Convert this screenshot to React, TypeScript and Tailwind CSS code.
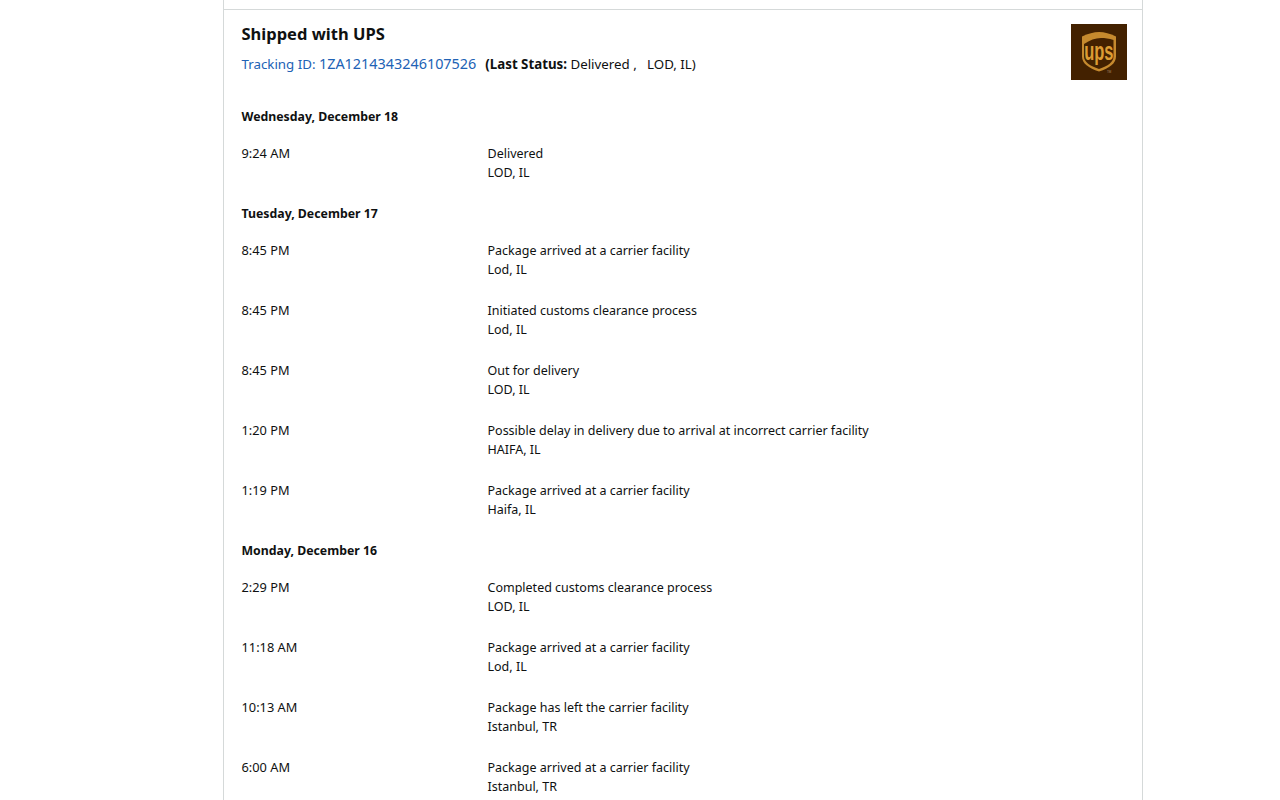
const days = [
    {
        date: "Wednesday, December 18",
        events: [{ time: "9:24 AM", status: "Delivered", place: "LOD, IL" }],
    },
    {
        date: "Tuesday, December 17",
        events: [
            { time: "8:45 PM", status: "Package arrived at a carrier facility", place: "Lod, IL" },
            { time: "8:45 PM", status: "Initiated customs clearance process", place: "Lod, IL" },
            { time: "8:45 PM", status: "Out for delivery", place: "LOD, IL" },
            { time: "1:20 PM", status: "Possible delay in delivery due to arrival at incorrect carrier facility", place: "HAIFA, IL" },
            { time: "1:19 PM", status: "Package arrived at a carrier facility", place: "Haifa, IL" },
        ],
    },
    {
        date: "Monday, December 16",
        events: [
            { time: "2:29 PM", status: "Completed customs clearance process", place: "LOD, IL" },
            { time: "11:18 AM", status: "Package arrived at a carrier facility", place: "Lod, IL" },
            { time: "10:13 AM", status: "Package has left the carrier facility", place: "Istanbul, TR" },
            { time: "6:00 AM", status: "Package arrived at a carrier facility", place: "Istanbul, TR" },
        ],
    },
]

function UpsLogo() {
    return (
        <svg width="56" height="56" viewBox="0 0 56 56" className="shrink-0">
            <rect width="56" height="56" fill="#432100" />
            <path d="M11 12.500C17 9.500 23 8 28 8c5.500 0 11 1.500 17 4.500v20c0 7-6.500 11.500-17 15-10.500-3.500-17-8-17-15z" fill="#c68a2e" />
            <path d="M13 20C19 16 24 14 30 14c4 0 8 .6 12.500 2v16.500c0 5.500-5.500 9.500-14.500 12.500-9-3-15-7-15-12.500z" fill="#432100" />
            <text transform="translate(27.800 36) scale(0.66 1)" textAnchor="middle" fontFamily="Liberation Sans, sans-serif" fontWeight="700" fontSize="25" fill="#dc9c34">ups</text>
            <text x="36" y="49" fontFamily="Liberation Sans, sans-serif" fontSize="3" fill="#a88a60">TM</text>
        </svg>
    )
}

export default function App() {
    return (
        <div className="h-[800px] overflow-hidden bg-white font-['Noto_Sans',sans-serif] text-[12.5px] leading-[19px] text-[#0f1111]">
            <div className="ml-[223px] h-[800px] w-[920px] overflow-hidden border-x border-[#d5d9d9] pt-[9px]">
                <div className="border-t border-[#d5d9d9] pt-[13px] pl-[17.5px] pr-[15px]">
                    <div className="flex justify-between">
                        <div>
                            <h2 className="text-[16.5px] leading-[22px] font-bold">Shipped with UPS</h2>
                            <p className="mt-[9px] text-[13.3px] leading-[20px]">
                                <a className="text-[#2162b5]">Tracking ID: <span className="text-[14.4px]">1ZA1214343246107526</span></a>
                                <span className="ml-[9px]"><b>(Last Status:</b> Delivered ,&nbsp;&nbsp; LOD, IL)</span>
                            </p>
                        </div>
                        <div className="pt-px">
                            <UpsLogo />
                        </div>
                    </div>
                    <div className="mt-[27px]">
                        {days.map((day) => (
                            <div key={day.date} className="mb-[22px]">
                                <h3 className="mb-[18px] text-[12.3px] font-bold">{day.date}</h3>
                                <ul className="flex flex-col gap-[22px]">
                                    {day.events.map((event, i) => (
                                        <li key={i} className="flex">
                                            <span className="w-[246px] shrink-0 text-[12.8px]">{event.time}</span>
                                            <div>
                                                <p>{event.status}</p>
                                                <p>{event.place}</p>
                                            </div>
                                        </li>
                                    ))}
                                </ul>
                            </div>
                        ))}
                    </div>
                </div>
            </div>
        </div>
    )
}
